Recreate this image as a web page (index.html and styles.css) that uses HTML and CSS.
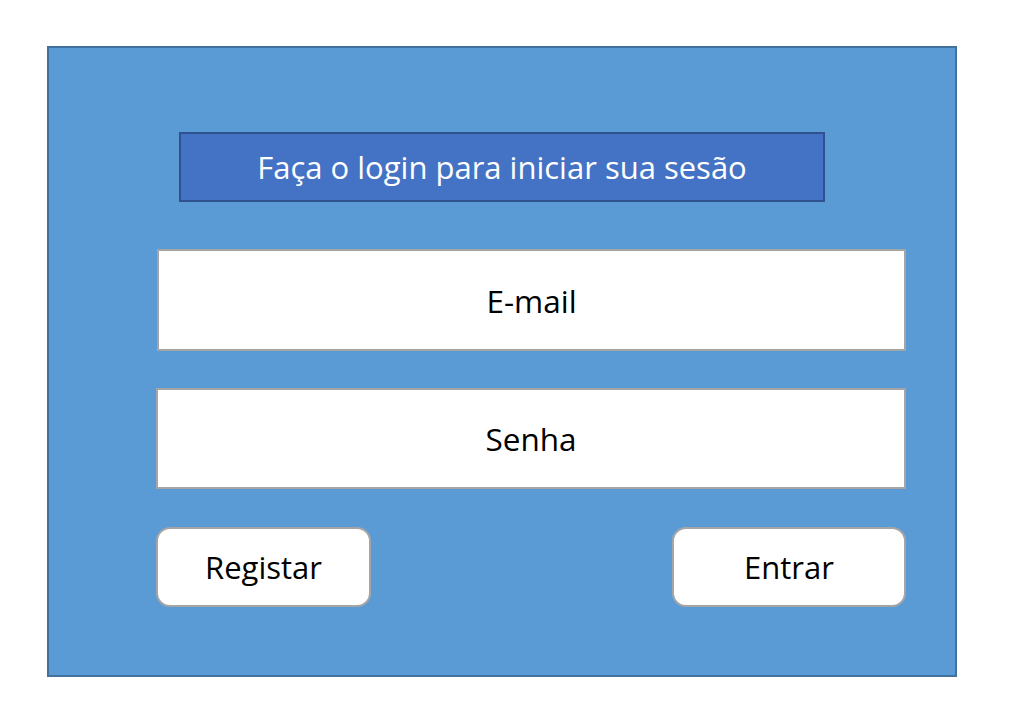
FILE: index.html
```html
<!DOCTYPE html>
<html lang="pt">
<head>
<meta charset="utf-8">
<title>Login</title>
<link rel="stylesheet" href="styles.css">
</head>
<body>
<div class="panel">
  <div class="title">Faça o login para iniciar sua sesão</div>
  <div class="field field-email">E-mail</div>
  <div class="field field-pass">Senha</div>
  <div class="actions">
    <div class="btn btn-register">Registar</div>
    <div class="btn btn-enter">Entrar</div>
  </div>
</div>
</body>
</html>
```
FILE: styles.css
```css
html, body {
  margin: 0;
  padding: 0;
  background: #ffffff;
}
body {
  font-family: "Open Sans", "Lato", "Liberation Sans", sans-serif;
  padding: 46px 0 0 47px;
}
.panel {
  box-sizing: border-box;
  width: 910px;
  height: 631px;
  border: 2px solid #41719c;
  background: #5b9bd5;
  display: flex;
  flex-direction: column;
  align-items: flex-start;
}
.title {
  box-sizing: border-box;
  margin: 84px 0 0 130px;
  width: 646px;
  height: 70px;
  border: 2px solid #2f528f;
  background: #4472c4;
  color: #ffffff;
  font-size: 31px;
  display: flex;
  align-items: center;
  justify-content: center;
}
.field {
  box-sizing: border-box;
  height: 102px;
  background: #ffffff;
  border: 2px solid #a5a5a5;
  color: #000000;
  font-size: 31.5px;
  display: flex;
  align-items: center;
  justify-content: center;
}
.field-email {
  margin: 47px 0 0 108px;
  width: 749px;
}
.field-pass {
  margin: 37px 0 0 107px;
  width: 750px;
  height: 101px;
}
.actions {
  margin: 38px 0 0 107px;
  width: 750px;
  display: flex;
  justify-content: space-between;
}
.btn {
  box-sizing: border-box;
  height: 80px;
  background: #ffffff;
  border: 2px solid #a5a5a5;
  border-radius: 14px;
  color: #000000;
  font-size: 31px;
  display: flex;
  align-items: center;
  justify-content: center;
}
.btn-register { width: 215px; }
.btn-enter { width: 234px; }
```
